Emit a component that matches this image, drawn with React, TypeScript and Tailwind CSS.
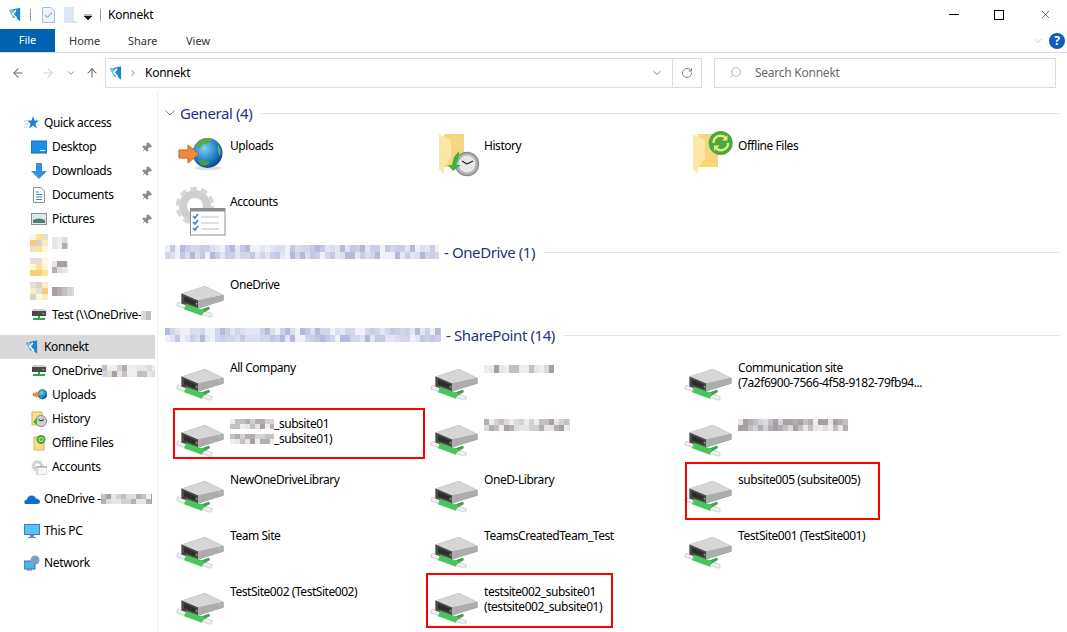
import { ArrowLeft, ArrowRight, ArrowUp, ChevronDown, ChevronRight, Pin, RotateCw, Search, X } from "lucide-react";
import React from "react";

// pixelated "redacted" strips
function Blur({ w, rows = 1, cell = 6, h, colors, seed = 1 }: { w: number; rows?: number; cell?: number; h?: number; colors: string[]; seed?: number }) {
  const cols = Math.ceil(w / cell);
  const cells = [];
  let s = seed * 7919;
  for (let i = 0; i < cols * rows; i++) {
    s = (s * 137 + 71) % 1009;
    cells.push(colors[s % colors.length]);
  }
  return (
    <span
      className="inline-grid overflow-hidden align-middle shrink-0"
      style={{ width: w, gridTemplateColumns: `repeat(${cols}, ${cell}px)`, gridAutoRows: h ?? cell }}
    >
      {cells.map((c, i) => (
        <span key={i} style={{ backgroundColor: c }} />
      ))}
    </span>
  );
}

const headBlur = ["#e4e5f2", "#c5c8e2", "#d3d5ea", "#f0f0f8", "#b6bada", "#dcdeef", "#c9cfe8"];
const textBlur = ["#dcdcdc", "#c5bfc5", "#b4aeb4", "#e6e6e2", "#a89ea3", "#d2d2d6", "#efefe9"];

function Logo({ className }: { className?: string }) {
  return (
    <svg viewBox="0 0 14 16" className={className}>
      <path d="M0 3 L13 0 V16 L8 12 L5 12 Z" fill="#1c86cf" />
      <path d="M0 3 L5 2 L5 12 Z" fill="#6cc0ee" />
      <path d="M8 3 L4.5 7.5 L9 12.5" fill="none" stroke="#fff" strokeWidth="2" />
    </svg>
  );
}

function Drive() {
  return (
    <g>
      <path d="M6 36.5 L37 47" stroke="#c9c9c9" strokeWidth="5" strokeLinecap="round" />
      <path d="M6 36.5 L37 47" stroke="#f1f1f1" strokeWidth="3.4" strokeLinecap="round" />
      <path d="M8.5 25.5 L32 18 L50.5 27 V32.5 L25 40.5 L8.5 35.5 Z" fill="#8d8d8d" />
      <path d="M8.5 25.5 L32 18 L50.5 27 L25 32.5 Z" fill="#d6d6d6" />
      <path d="M8.5 25.5 L25 32.5 V40.5 L8.5 35.5 Z" fill="#4a4a4a" />
      <path d="M11 28.5 L23 33.5 V37.5 L11 33.5 Z" fill="#2c2c2c" />
      <path d="M25 32.5 L50.5 27 V32.5 L25 40.5 Z" fill="#adadad" />
      <rect x="22.6" y="35" width="1.6" height="1.6" fill="#3fdc5a" />
      <path d="M27 42 L36 38.5 L37 41 L30 45 Z" fill="#3aa94d" />
      <path d="M12 38.5 L30 45" stroke="#4ac55f" strokeWidth="6" />
    </g>
  );
}

function Globe() {
  return (
    <g>
      <defs>
        <radialGradient id="globe" cx="0.4" cy="0.35" r="0.7">
          <stop offset="0" stopColor="#7fd0f5" />
          <stop offset="0.6" stopColor="#1f7fc9" />
          <stop offset="1" stopColor="#0e3f85" />
        </radialGradient>
      </defs>
      <ellipse cx="35" cy="39" rx="13" ry="2" fill="#dedede" />
      <circle cx="34.5" cy="24" r="15" fill="url(#globe)" />
      <path d="M24 14 Q31 7 39 10 Q36 16 30 15 Q28 20 24 19 Z" fill="#5aa845" />
      <path d="M25 31 Q33 30 37 34 Q33 38 28 36 Z" fill="#4f9b3f" />
      <path d="M45 16 Q49 21 47 27 Q44 23 45 16 Z" fill="#6ab04c" />
      <path d="M6 21 H15 V16 L26 25 L15 34 V29 H6 Z" fill="#f08a3c" stroke="#c9601d" strokeWidth="1" />
    </g>
  );
}

function FolderOpen() {
  return (
    <g>
      <path d="M17 5 H37 V38 H17 Z" fill="#f5d77f" />
      <path d="M12 5 L24 11 V37 L17 38 V45 L12 40 Z" fill="#fbe7a6" />
      <path d="M24 30 H37 V38 H17 Z" fill="#fad673" />
    </g>
  );
}

function Clock() {
  return (
    <g>
      <circle cx="40" cy="35" r="11.5" fill="#b4b4b4" stroke="#8a8a8a" strokeWidth="1.4" />
      <circle cx="40" cy="35" r="8.5" fill="#e8e8e8" />
      <path d="M40 35 L35 32 M40 35 L46 32" stroke="#222" strokeWidth="1.2" />
      <path d="M32 22 L32 28 L29 36 L34 36 L26 42 L21 36 L25 36 L27 28 Z" fill="#3cb43c" />
    </g>
  );
}

function Sync() {
  return (
    <g>
      <circle cx="39.7" cy="14" r="12" fill="#4aa83e" />
      <path d="M32.5 14 A7 7 0 0 1 45 9.5 M47 14 A7 7 0 0 1 34.5 18.5" fill="none" stroke="#e3ee7c" strokeWidth="2.4" />
      <path d="M46.5 6 V11.5 H41 Z M33 22 V16.5 H38.5 Z" fill="#e3ee7c" />
    </g>
  );
}

function Gear() {
  return (
    <g>
      <circle cx="22" cy="21" r="12" fill="none" stroke="#cdcfd1" strokeWidth="8" />
      <circle cx="22" cy="21" r="17" fill="none" stroke="#d4d6d8" strokeWidth="4.5" strokeDasharray="6.5 4.2" />
      <rect x="17.5" y="23.5" width="34.5" height="26.5" fill="#fff" stroke="#8b8e92" strokeWidth="1" />
      <rect x="17.5" y="23.5" width="34.5" height="3" fill="#8b8e92" />
      <g stroke="#2f7fd0" strokeWidth="1.6" fill="none">
        <path d="M20 31 L22 33 L25 29" />
        <path d="M20 37 L22 39 L25 35" />
        <path d="M20 43 L22 45 L25 41" />
      </g>
      <path d="M28 32 H46 M28 38 H46 M28 44 H46" stroke="#c2c2c2" strokeWidth="1" />
    </g>
  );
}

function Big({ children }: { children: React.ReactNode }) {
  return (
    <svg viewBox="0 0 57 56" className="w-[57px] h-14 shrink-0">
      {children}
    </svg>
  );
}

function Tile({ icon, children, box }: { icon: React.ReactNode; children: React.ReactNode; box?: string }) {
  return (
    <div className="relative flex h-14">
      <Big>{icon}</Big>
      <div className="pt-[9px] text-[12px] leading-[15px] tracking-[-0.45px] text-black min-w-0">{children}</div>
      {box && <div className={`absolute border-2 border-[#ff0000] ${box}`} />}
    </div>
  );
}

function Heading({ chevron, children }: { chevron?: boolean; children: React.ReactNode }) {
  return (
    <div className="flex items-center h-6 pb-[2px] mb-[3px] text-[15px] tracking-[-0.4px] text-[#1e3287]">
      {chevron && (
        <svg viewBox="0 0 10 6" className="w-[10px] h-[6px] mr-[5px]">
          <path d="M0.5 0.5 L5 5 L9.5 0.5" fill="none" stroke="#8a8a8a" />
        </svg>
      )}
      {children}
      <div className="flex-1 h-px bg-[#e3e5e8] ml-2" />
    </div>
  );
}

function Row({ level = 2, icon, pin, active, children }: { level?: 1 | 2; icon: React.ReactNode; pin?: boolean; active?: boolean; children: React.ReactNode }) {
  return (
    <div className={`flex items-center h-6 w-[155px] overflow-hidden whitespace-nowrap text-[12px] tracking-[-0.35px] text-black ${level === 1 ? "pl-6 gap-1" : "pl-[31px] gap-[5px]"} ${active ? "bg-[#d9d9d9]" : ""}`}>
      <span className="w-4 h-4 shrink-0 flex items-center justify-center">{icon}</span>
      <span className="flex-1 flex items-center min-w-0">{children}</span>
      {pin && <Pin size={11} className="mr-[3px] shrink-0 rotate-45 text-[#8b8b8b] fill-[#8b8b8b]" />}
    </div>
  );
}

function Mini({ children }: { children: React.ReactNode }) {
  return (
    <svg viewBox="0 0 16 16" className="w-4 h-4">
      {children}
    </svg>
  );
}

const MiniDrive = (
  <Mini>
    <path d="M1 4 L4 2 H12 L15 4 V9 H1 Z" fill="#4a4a4a" />
    <path d="M1 4 L4 2 H12 L15 4 Z" fill="#cfcfcf" />
    <path d="M7 9 H9 V11 H14 V13 H2 V11 H7 Z" fill="#2fa84a" />
    <rect x="11" y="6" width="2" height="1" fill="#4ee06a" />
  </Mini>
);

const FolderBlur = ({ seed }: { seed: number }) => (
  <Blur w={18} rows={3} cell={6} h={6} seed={seed} colors={["#fde28f", "#f9edc9", "#d9d3c4", "#f4cf7a", "#e4e0d8", "#fff6dc"]} />
);

export default function App() {
  return (
    <div className="w-[1067px] h-[632px] overflow-hidden bg-white font-['Noto_Sans',sans-serif] tracking-[-0.25px] flex flex-col">
      {/* title bar */}
      <div className="flex items-center h-[29px] shrink-0 pl-[9px] text-[12px] text-black">
        <Logo className="w-3 h-[15px]" />
        <div className="w-px h-3 bg-[#9a9a9a] ml-[9px]" />
        <svg viewBox="0 0 13 16" className="w-[13px] h-4 ml-[11px]">
          <path d="M0.5 0.5 H9 L12.5 4 V15.5 H0.5 Z" fill="#eef2f9" stroke="#a9bcdc" />
          <path d="M3 8 L5.5 10.5 L10 5.5" fill="none" stroke="#a9b2c0" strokeWidth="1.2" />
        </svg>
        <svg viewBox="0 0 13 16" className="w-[13px] h-4 ml-[9px]">
          <path d="M0 0 H10 V14 H13 V16 H0 Z" fill="#dfe6f3" />
        </svg>
        <svg viewBox="0 0 8 6" className="w-2 h-[6px] ml-[7px] mt-1">
          <path d="M0 0 H8 M0 2 H8 L4 6 Z" fill="#111" stroke="#111" strokeWidth="0.6" />
        </svg>
        <div className="w-px h-3 bg-[#9a9a9a] ml-2" />
        <span className="ml-[7px]">Konnekt</span>
        <div className="flex-1" />
        <div className="w-[10px] h-px bg-black mr-[35px]" />
        <div className="w-[10px] h-[10px] border border-black mr-[35px]" />
        <X size={13} strokeWidth={1} className="text-black mr-[15px]" />
      </div>

      {/* ribbon tabs */}
      <div className="flex items-stretch h-6 shrink-0 border-b border-[#dadbdc] text-[11px] text-[#333] tracking-[0px]">
        <div className="w-[55px] bg-[#0063b1] text-white flex items-center justify-center">File</div>
        <div className="flex items-center pl-[14px] w-[73px] pt-px">Home</div>
        <div className="flex items-center w-[58px] pt-px">Share</div>
        <div className="flex items-center pt-px">View</div>
        <div className="flex-1" />
        <div className="flex items-center mr-[2px]">
          <ChevronDown size={12} strokeWidth={1} className="text-[#8a8a8a] mr-[5px]" />
          <div className="w-4 h-4 rounded-full bg-[#0a5fc0] text-white flex items-center justify-center text-[12px] font-bold">?</div>
        </div>
      </div>

      {/* nav */}
      <div className="flex items-center h-[39px] shrink-0 text-[12px]">
        <ArrowLeft size={14} strokeWidth={1.8} className="ml-[11px] text-[#666]" />
        <ArrowRight size={14} strokeWidth={1.8} className="ml-4 text-[#cfcfcf]" />
        <ChevronDown size={10} strokeWidth={2} className="ml-[11px] text-[#777]" />
        <ArrowUp size={14} strokeWidth={1.8} className="ml-[9px] text-[#666]" />
        <div className="flex items-center w-[597px] h-[30px] border-[1.5px] border-[#dcdcdc] ml-[6px]">
          <Logo className="w-3 h-[14px] ml-[4px]" />
          <ChevronRight size={10} strokeWidth={2} className="ml-[6px] text-[#777]" />
          <span className="ml-[7px] text-black">Konnekt</span>
          <div className="flex-1" />
          <ChevronDown size={12} strokeWidth={2} className="text-[#777] mr-[9px]" />
          <div className="w-px h-full bg-[#dcdcdc]" />
          <RotateCw size={12} strokeWidth={1.8} className="text-[#777] mx-[8px]" />
        </div>
        <div className="flex items-center w-[342px] h-[30px] border-[1.5px] border-[#dcdcdc] ml-3 text-[#6b6b6b]">
          <Search size={13} strokeWidth={1} className="-scale-x-100 ml-[14px] text-[#8a8088]" />
          <span className="ml-[13px]">Search Konnekt</span>
        </div>
      </div>

      <div className="flex flex-1 min-h-0">
        {/* sidebar */}
        <div className="w-[158px] shrink-0 border-r border-[#f0f0f0] pt-[19px]">
          <Row level={1} icon={<Mini><path d="M9 1 L10.5 5.5 H15 L11.5 8.5 L13 13.5 L9 10.5 L5 13.5 L6.5 8.5 L3 5.5 H7.5 Z" fill="#1f80d8" /><path d="M0 6 H3 M1 9 H4 M0 12 H3" stroke="#9cc8ee" /></Mini>}>Quick access</Row>
          <Row pin icon={<Mini><rect x="0" y="2" width="16" height="12" fill="#1c8fe6" stroke="#0f6fc0" /><path d="M9 11.5 H14" stroke="#fff" /></Mini>}>Desktop</Row>
          <Row pin icon={<Mini><path d="M5 0 H11 V8 H16 L8 16 L0 8 H5 Z" fill="#3b8fe0" /></Mini>}>Downloads</Row>
          <Row pin icon={<Mini><path d="M2.5 0.5 H10 L13.5 4 V15.5 H2.5 Z" fill="#fff" stroke="#8f8f8f" /><path d="M5 5 H8 M5 7.5 H11 M5 10 H11 M5 12.5 H11" stroke="#2f8bd0" /></Mini>}>Documents</Row>
          <Row pin icon={<Mini><rect x="0.5" y="2.5" width="15" height="11" fill="#dfe7ef" stroke="#8f8f8f" /><path d="M2 9 Q8 6 14 9 V12 H2 Z" fill="#4f7f6a" /></Mini>}>Pictures</Row>
          <Row icon={<FolderBlur seed={3} />}><Blur w={16} rows={2} cell={5} h={6} seed={4} colors={textBlur} /></Row>
          <Row icon={<FolderBlur seed={5} />}><Blur w={16} rows={2} cell={5} h={6} seed={6} colors={textBlur} /></Row>
          <Row icon={<FolderBlur seed={7} />}><Blur w={22} rows={1} cell={5} h={9} seed={8} colors={textBlur} /></Row>
          <Row icon={MiniDrive}>
            <span className="truncate">Test (\\OneDrive-</span>
            <Blur w={10} rows={1} cell={5} h={9} seed={9} colors={textBlur} />
          </Row>
          <div className="h-2" />
          <Row level={1} active icon={<Logo className="w-3 h-[14px]" />}>Konnekt</Row>
          <Row icon={MiniDrive}>
            OneDrive
            <Blur w={58} rows={2} cell={5} h={6} seed={11} colors={textBlur} />
          </Row>
          <Row icon={<Mini><g transform="scale(0.33) translate(0 -2)"><Globe /></g></Mini>}>Uploads</Row>
          <Row icon={<Mini><path d="M1 1 H11 V14 H1 Z" fill="#f8dd8c" stroke="#d9b755" /><circle cx="10" cy="10" r="5.5" fill="#cfcfcf" stroke="#888" /><path d="M10 10 L7.5 8.5 M10 10 L13 8.5" stroke="#222" /><path d="M2 11 L6 7 L6 14 Z" fill="#3cb43c" /></Mini>}>History</Row>
          <Row icon={<Mini><path d="M3 2 H13 V15 H3 Z" fill="#f8dd8c" stroke="#d9b755" /><circle cx="10" cy="4.5" r="4.5" fill="#4aa83e" /><circle cx="10" cy="4.5" r="2" fill="none" stroke="#e3ee7c" /></Mini>}>Offline Files</Row>
          <Row icon={<Mini><g transform="scale(0.31) translate(-1 1)"><Gear /></g></Mini>}>Accounts</Row>
          <div className="h-2" />
          <Row level={1} icon={<Mini><path d="M1 13 Q-1 9 3 8.5 Q4 4 8.5 4.5 Q11 5 12 7.5 Q16 8 16 11 Q16 13 13.5 13 Z" fill="#0a6fd0" /></Mini>}>
            OneDrive -<Blur w={51} rows={2} cell={5} h={5} seed={13} colors={textBlur} />
          </Row>
          <div className="h-2" />
          <Row level={1} icon={<Mini><rect x="0.5" y="1.5" width="15" height="10" fill="#5fc0f5" stroke="#2f86c9" /><path d="M6 12 H10 V14 H12 V15 H4 V14 H6 Z" fill="#7b8b99" /></Mini>}>This PC</Row>
          <div className="h-2" />
          <Row level={1} icon={<Mini><rect x="0" y="6" width="11" height="8" fill="#4fb3ea" stroke="#2a78b8" /><path d="M3 15 H8" stroke="#667" /><circle cx="11" cy="5" r="4.5" fill="#7f9fc5" /></Mini>}>Network</Row>
        </div>

        {/* content */}
        <div className="flex-1 min-w-0 pt-[10px] pl-[7px] pr-[7px]">
          <Heading chevron>General (4)</Heading>
          <div className="grid grid-cols-[254px_254px_254px] ml-2">
            <Tile icon={<Globe />}>Uploads</Tile>
            <Tile icon={<><FolderOpen /><Clock /></>}>History</Tile>
            <Tile icon={<><FolderOpen /><Sync /></>}>Offline Files</Tile>
            <Tile icon={<Gear />}>Accounts</Tile>
          </div>

          <Heading>
            <Blur w={274} rows={2} cell={5} h={7} seed={17} colors={headBlur} />
            <span className="ml-[5px]">- OneDrive (1)</span>
          </Heading>
          <div className="grid grid-cols-[254px_254px_254px] ml-2">
            <Tile icon={<Drive />}>OneDrive</Tile>
          </div>

          <Heading>
            <Blur w={276} rows={2} cell={5} h={7} seed={23} colors={headBlur} />
            <span className="ml-[5px]">- SharePoint (14)</span>
          </Heading>
          <div className="grid grid-cols-[254px_254px_254px] ml-2">
            <Tile icon={<Drive />}>All Company</Tile>
            <Tile icon={<Drive />}><Blur w={70} h={8} rows={1} cell={5} seed={29} colors={textBlur} /></Tile>
            <Tile icon={<Drive />}>
              Communication site
              <br />
              (7a2f6900-7566-4f58-9182-79fb94...
            </Tile>
            <Tile icon={<Drive />} box="left-0 top-px w-[252px] h-[51px]">
              <div className="flex items-center"><Blur w={44} rows={2} cell={5} h={5} seed={31} colors={textBlur} />_subsite01</div>
              <div className="flex items-center"><Blur w={44} rows={2} cell={5} h={5} seed={37} colors={textBlur} />_subsite01)</div>
            </Tile>
            <Tile icon={<Drive />}><Blur w={86} rows={2} cell={5} h={6} seed={41} colors={textBlur} /></Tile>
            <Tile icon={<Drive />}><Blur w={110} rows={2} cell={5} h={6} seed={43} colors={textBlur} /></Tile>
            <Tile icon={<Drive />}>NewOneDriveLibrary</Tile>
            <Tile icon={<Drive />}>OneD-Library</Tile>
            <Tile icon={<Drive />} box="left-1 -top-px w-[195px] h-[58px]">subsite005 (subsite005)</Tile>
            <Tile icon={<Drive />}>Team Site</Tile>
            <Tile icon={<Drive />}>TeamsCreatedTeam_Test</Tile>
            <Tile icon={<Drive />}>TestSite001 (TestSite001)</Tile>
            <Tile icon={<Drive />}>TestSite002 (TestSite002)</Tile>
            <Tile icon={<Drive />} box="-left-px -top-[2px] w-[187px] h-[55px]">
              testsite002_subsite01
              <br />
              (testsite002_subsite01)
            </Tile>
          </div>
        </div>
      </div>
    </div>
  );
}
